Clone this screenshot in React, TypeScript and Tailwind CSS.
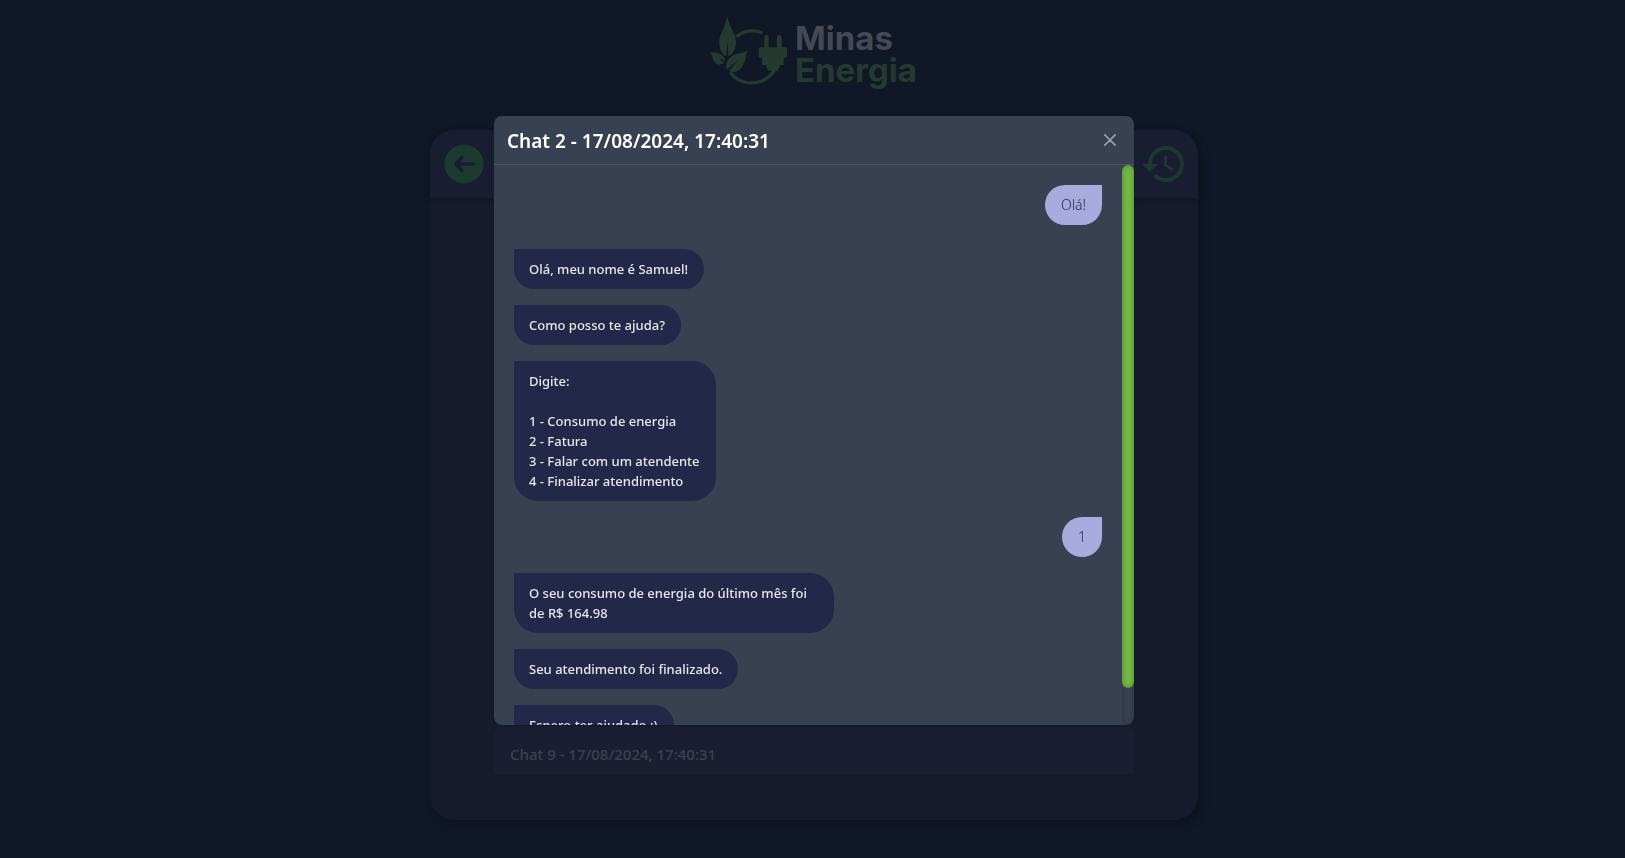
import type { ReactNode } from "react";
import { MdHistory } from "react-icons/md";

type Message = { from: "user" | "bot"; text: string };

const groups: Message[][] = [
  [{ from: "user", text: "Olá!" }],
  [
    { from: "bot", text: "Olá, meu nome é Samuel!" },
    { from: "bot", text: "Como posso te ajuda?" },
    {
      from: "bot",
      text: "Digite:\n\n1 - Consumo de energia\n2 - Fatura\n3 - Falar com um atendente\n4 - Finalizar atendimento",
    },
    { from: "user", text: "1" },
    { from: "bot", text: "O seu consumo de energia do último mês foi de R$ 164.98" },
    { from: "bot", text: "Seu atendimento foi finalizado." },
    { from: "bot", text: "Espero ter ajudado :)" },
  ],
];

function Logo() {
  return (
    <div className="flex w-[218px] items-start pt-[10px]">
      <svg viewBox="0 0 270 240" className="h-20 w-[90px] shrink-0 fill-[#243a2f]" aria-hidden="true">
        <g fill="none" stroke="#243a2f" strokeWidth="10">
          <path d="M94 80 A74 74 0 0 1 172 69" />
          <path d="M76 187 C100 225 172 238 212 176" />
        </g>
        <path d="M67 18 C73 55 94 72 93 98 C92 120 83 133 70 139 L67 94 L64 139 C51 133 43 120 43 98 C42 72 61 55 67 18 Z" />
        <path d="M15 128 C38 126 57 130 61 154 L42 143 L57 160 C38 169 27 158 24 146 C22 138 20 132 15 128 Z" />
        <path d="M127 122 C121 142 121 158 109 173 C98 187 82 190 73 182 L99 150 L66 178 C60 166 66 147 82 137 C97 128 113 130 127 122 Z" />
        <path d="M178 112 V81 Q178 75 185 75 Q191 75 191 81 V112 H216 V81 Q216 75 223 75 Q230 75 230 81 V112 H240 Q246 112 246 118 V137 Q246 143 240 143 H236 V165 H226 L218 182 H189 L182 165 H171 V143 H167 Q161 143 161 137 V118 Q161 112 167 112 Z" />
      </svg>
      <div className="pt-3 font-['Inter',sans-serif] text-[33px] leading-8 font-bold">
        <div className="text-[#454955]">Minas</div>
        <div className="text-[#243a2f]">Energia</div>
      </div>
    </div>
  );
}

function Bubble({ from, children }: { from: Message["from"]; children: ReactNode }) {
  return from === "user" ? (
    <li className="max-w-xs self-end rounded-3xl rounded-tr-none bg-[#a7abde] px-4 py-[10px] text-sm leading-5 font-light whitespace-pre-line text-[#262b50]">
      {children}
    </li>
  ) : (
    <li className="max-w-xs self-start rounded-3xl rounded-tl-none bg-[#232748] px-4 py-[10px] pl-[15px] font-medium whitespace-pre-line text-gray-200">
      {children}
    </li>
  );
}

export default function App() {
  return (
    <div className="font-['Noto_Sans',sans-serif]">
      <div className="flex min-h-screen flex-col items-center bg-[#101726] pb-[38px] pl-[3px]">
        <header className="flex h-[130px] shrink-0 items-start">
          <Logo />
        </header>
        <main className="flex w-full max-w-3xl flex-1 flex-col rounded-3xl bg-[#151a2d] shadow-[4px_4px_10px_rgba(0,0,0,0.2)]">
          <div className="flex items-center justify-between rounded-t-3xl bg-[#181d31] p-[10px] shadow-[0_3px_6px_rgba(0,0,0,0.15)]">
            <button type="button" aria-label="Voltar" className="flex size-12 items-center justify-center">
              <svg viewBox="0 0 80 80" className="size-10" aria-hidden="true">
                <circle cx="40" cy="40" r="39" fill="#1d3a31" />
                <path
                  d="M36 27 L24 40 L36 53 M25 40 H59"
                  fill="none"
                  stroke="#181d31"
                  strokeWidth="7"
                  strokeLinecap="round"
                  strokeLinejoin="round"
                />
              </svg>
            </button>
            <button type="button" aria-label="Histórico">
              <MdHistory className="size-12 text-[#1d3830]" />
            </button>
          </div>
          <div className="flex flex-1 flex-col justify-end px-16 pb-[46px]">
            <button
              type="button"
              className="h-12 rounded-t-lg bg-[#1a1e33] px-4 pt-2 text-left text-[15px] font-medium text-[#3d414d]"
            >
              Chat 9 - 17/08/2024, 17:40:31
            </button>
          </div>
        </main>
      </div>

      <div className="fixed inset-0 flex justify-center pt-[116px] pb-[133px] pl-[3px]">
        <section
          role="dialog"
          aria-modal="true"
          aria-labelledby="chat-title"
          className="flex w-full max-w-[640px] flex-col overflow-hidden rounded-lg bg-[#384151] shadow-sm"
        >
          <div className="flex h-[49px] shrink-0 items-center justify-between border-b border-[#4b5563] pr-2 pl-[13px]">
            <h3 id="chat-title" className="pt-0.5 text-[19px] font-semibold text-white">
              Chat 2 - 17/08/2024, 17:40:31
            </h3>
            <button type="button" aria-label="Fechar" className="flex size-8 items-center justify-center text-gray-400">
              <svg viewBox="0 0 14 14" className="size-3" fill="none" aria-hidden="true">
                <path
                  d="m1 1 6 6m0 0 6 6M7 7l6-6M7 7l-6 6"
                  stroke="currentColor"
                  strokeWidth="2"
                  strokeLinecap="round"
                />
              </svg>
            </button>
          </div>
          <div className="flex min-h-0 flex-1">
            <div className="flex flex-1 flex-col gap-6 overflow-y-auto p-5 text-[13px] leading-5 [scrollbar-width:none]">
              {groups.map((group, g) => (
                <ul key={g} className="flex flex-col gap-4">
                  {group.map((message) => (
                    <Bubble key={message.text} from={message.from}>
                      {message.text}
                    </Bubble>
                  ))}
                </ul>
              ))}
            </div>
            <div className="w-3 shrink-0 rounded-full shadow-[inset_0_0_5px_rgba(0,0,0,0.25)]">
              <div className="h-14/15 rounded-full bg-[#74b944] shadow-[inset_0_0_5px_rgba(0,0,0,0.3)]" />
            </div>
          </div>
        </section>
      </div>
    </div>
  );
}
